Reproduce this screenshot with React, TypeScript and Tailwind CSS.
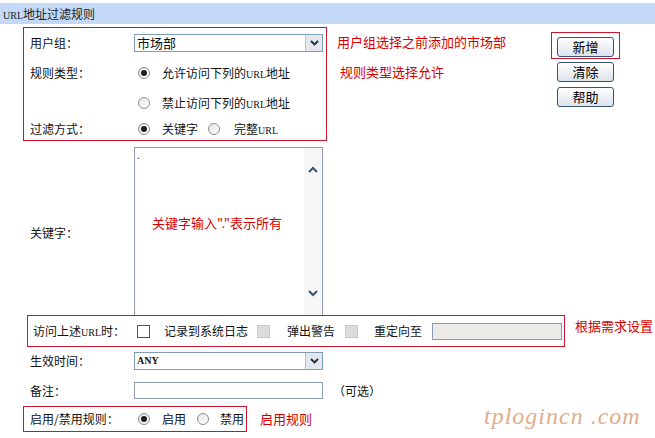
import React from 'react';

const cjk = "font-['Noto_Sans_CJK_SC','Noto_Sans',sans-serif]";

const Radio = ({ checked }: { checked?: boolean }) => (
  <span className="flex h-[12px] w-[12px] shrink-0 items-center justify-center rounded-full border border-[#8a9099] bg-gradient-to-br from-[#e4e4e4] to-white">
    {checked && <span className="h-[6px] w-[6px] rounded-full bg-[#1f1f1f]" />}
  </span>
);

const Check = ({ disabled }: { disabled?: boolean }) => (
  <span
    className={`block h-[13px] w-[13px] shrink-0 border ${
      disabled ? 'border-[#c8c8c8] bg-[#dcdcdc]' : 'border-[#555] bg-white'
    }`}
  />
);

const Url = () => <span className="font-['Liberation_Serif',serif] text-[10px]">URL</span>;

const Select = ({ value, small }: { value: string; small?: boolean }) => (
  <div className="flex h-[18px] w-[189px] items-stretch border border-[#7f9db9] bg-white">
    <div
      className={`flex-1 pl-[2px] leading-[16px] ${
        small ? "font-['Liberation_Serif',serif] text-[10px] font-bold" : 'text-[13px]'
      }`}
    >
      {value}
    </div>
    <div className="flex w-[17px] items-center justify-center border-l border-[#b7c2d2] bg-[#e3e8ef]">
      <svg width="9" height="6" viewBox="0 0 9 6">
        <path d="M1 1 L4.5 4.5 L8 1" fill="none" stroke="#1e2d44" strokeWidth="1.8" />
      </svg>
    </div>
  </div>
);

const Btn = ({ label }: { label: string }) => (
  <button className="block h-[20px] w-[57px] rounded-[3px] border border-[#3a5272] bg-gradient-to-b from-white to-[#dbe3ec] text-[13px] leading-[18px] text-black">
    {label}
  </button>
);

export default function App() {
  return (
    <div className={`relative h-[438px] w-[655px] overflow-hidden bg-white text-[12px] text-[#111] ${cjk}`}>
      <div className="mt-[3px] h-[21px] bg-[#c4d9f8] pl-[3px] leading-[21px] text-[#222]">
        <Url />
        地址过滤规则
      </div>

      {/* top block */}
      <div className="mt-[3px] flex items-start">
        <div className="ml-[23px] flex w-[304px] flex-col border border-[#c8142c] pl-[6px]">
          <div className="flex h-[29px] items-center">
            <span className="w-[104px]">用户组：</span>
            <Select value="市场部" />
          </div>
          <div className="flex h-[31px] items-center">
            <span className="w-[108px]">规则类型：</span>
            <Radio checked />
            <span className="ml-[12px]">允许访问下列的<Url />地址</span>
          </div>
          <div className="flex h-[30px] items-center">
            <span className="w-[108px]" />
            <Radio />
            <span className="ml-[12px]">禁止访问下列的<Url />地址</span>
          </div>
          <div className="flex h-[22px] items-center">
            <span className="w-[108px]">过滤方式：</span>
            <Radio checked />
            <span className="ml-[12px]">关键字</span>
            <span className="ml-[10px]"><Radio /></span>
            <span className="ml-[14px]">完整<Url /></span>
          </div>
        </div>

        <div className="ml-[10px] flex flex-col text-[13px] text-[#d40000]">
          <span className="mt-[6px] leading-[18px]">用户组选择之前添加的市场部</span>
          <span className="ml-[3px] mt-[12px] leading-[18px]">规则类型选择允许</span>
        </div>

        <div className="ml-auto mr-[35px] mt-[5px] flex flex-col items-start gap-[3px]">
          <div className="border border-[#c8142c] px-[5px] pb-[1px] pt-[4px]">
            <Btn label="新增" />
          </div>
          <div className="pl-[6px]">
            <Btn label="清除" />
          </div>
          <div className="mt-[2px] pl-[6px]">
            <Btn label="帮助" />
          </div>
        </div>
      </div>

      {/* keyword textarea */}
      <div className="mt-[6px] flex items-center">
        <span className="ml-[30px] w-[104px] pt-[2px]">关键字：</span>
        <div className="flex h-[169px] w-[189px] border border-[#8c9bb0] bg-white">
          <div className="relative flex-1">
            <span className="absolute left-[2px] top-[2px] text-[10px] leading-[10px]">.</span>
            <span className="absolute left-[17px] top-[65px] text-[13px] text-[#d40000]">
              关键字输入"."表示所有
            </span>
          </div>
          <div className="flex w-[18px] flex-col items-center justify-between bg-[#f6f6f6] py-[18px]">
            <svg width="10" height="7" viewBox="0 0 10 7">
              <path d="M1 6 L5 2 L9 6" fill="none" stroke="#3b516f" strokeWidth="2" />
            </svg>
            <svg width="10" height="7" viewBox="0 0 10 7">
              <path d="M1 1 L5 5 L9 1" fill="none" stroke="#3b516f" strokeWidth="2" />
            </svg>
          </div>
        </div>
      </div>

      {/* access action row */}
      <div className="-mt-[1px] flex items-start">
        <div className="ml-[27px] flex h-[32px] w-[538px] items-center border border-[#c8142c] pl-[5px]">
          <span className="w-[104px]">访问上述<Url />时：</span>
          <Check />
          <span className="ml-[14px]">记录到系统日志</span>
          <span className="ml-[9px]"><Check disabled /></span>
          <span className="ml-[17px]">弹出警告</span>
          <span className="ml-[10px]"><Check disabled /></span>
          <span className="ml-[16px]">重定向至</span>
          <div className="ml-[10px] h-[17px] w-[130px] border border-[#8c9bb0] bg-[#eceae6]" />
        </div>
        <span className="ml-[10px] mt-[2px] text-[13px] leading-[18px] text-[#d40000]">根据需求设置</span>
      </div>

      <div className="flex h-[28px] items-center">
        <span className="ml-[30px] w-[104px]">生效时间：</span>
        <Select value="ANY" small />
      </div>

      <div className="flex h-[31px] items-center">
        <span className="ml-[30px] w-[104px]">备注：</span>
        <div className="h-[17px] w-[189px] border border-[#8c9bb0] bg-white" />
        <span className="ml-[10px]">（可选）</span>
      </div>

      <div className="flex items-center">
        <div className="ml-[23px] flex h-[26px] w-[224px] items-center border border-[#c8142c] pl-[6px]">
          <span className="w-[108px]">启用/禁用规则：</span>
          <Radio checked />
          <span className="ml-[12px]">启用</span>
          <span className="ml-[11px]"><Radio /></span>
          <span className="ml-[11px]">禁用</span>
        </div>
        <span className="ml-[13px] text-[13px] text-[#d40000]">启用规则</span>
      </div>

      <span className="absolute left-[484px] top-[398px] font-['Liberation_Serif',serif] text-[24px] italic tracking-[1px] text-[#d99a6e] opacity-80">
        tplogincn .com
      </span>
    </div>
  );
}
